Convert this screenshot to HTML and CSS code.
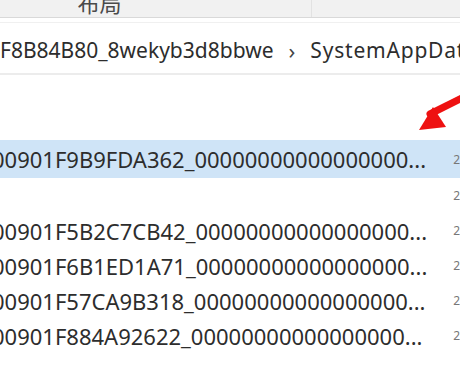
FILE: index.html
```html
<!DOCTYPE html>
<html lang="zh-CN">
<head>
  <meta charset="UTF-8">
  <title>SystemAppData</title>
  <link rel="stylesheet" href="styles.css">
</head>
<body>
  <div class="window">
    <div class="ribbon">
      <div class="ribbon-group">布局</div>
      <div class="ribbon-group wide"></div>
    </div>
    <div class="address">
      <span class="crumb">F8B84B80_8wekyb3d8bbwe</span>
      <span class="sep">›</span>
      <span class="crumb last">SystemAppData</span>
    </div>
    <div class="files">
      <div class="row selected"><span class="name">00901F9B9FDA362_00000000000000000...</span><span class="date">2</span></div>
      <div class="row"><span class="name"></span><span class="date">2</span></div>
      <div class="row"><span class="name">00901F5B2C7CB42_00000000000000000...</span><span class="date">2</span></div>
      <div class="row"><span class="name">00901F6B1ED1A71_00000000000000000...</span><span class="date">2</span></div>
      <div class="row"><span class="name">00901F57CA9B318_00000000000000000...</span><span class="date">2</span></div>
      <div class="row"><span class="name">00901F884A92622_00000000000000000...</span><span class="date">2</span></div>
    </div>
    <svg class="arrow" width="60" height="50" viewBox="0 0 60 50">
      <path d="M62 13 L30 29" stroke="#ee1111" stroke-width="7" stroke-linecap="round"/>
      <polygon points="19,45 33,22 46,42" fill="#ee1111"/>
    </svg>
  </div>
</body>
</html>
```
FILE: styles.css
```css
body {
  margin: 0;
  background: #fff;
  font-family: 'Noto Sans', 'Noto Sans CJK SC', sans-serif;
  color: #2d2d2d;
}
.window {
  width: 460px;
  height: 365px;
  overflow: hidden;
  position: relative;
}
.ribbon {
  height: 17px;
  background: #f1f1f1;
  border-bottom: 1px solid #d9d9d9;
  display: flex;
  overflow: hidden;
}
.ribbon-group {
  width: 312px;
  border-right: 1px solid #e2e2e2;
  text-align: center;
  font-size: 22px;
  line-height: 22px;
  margin-top: -8px;
  color: #4a4a4a;
  box-sizing: border-box;
  padding-right: 112px;
}
.ribbon-group.wide {
  flex: 1;
  border-right: none;
}
.address {
  height: 53px;
  margin-top: 4px;
  border-top: 1px solid #f0f0f0;
  border-bottom: 2px solid #ececec;
  display: flex;
  align-items: center;
  white-space: nowrap;
  font-size: 21px;
  padding-top: 4px;
  box-sizing: border-box;
}
.address .sep {
  margin: 0 15px 0 15px;
  font-size: 22px;
  color: #444;
}
.address .last {
  letter-spacing: 0.8px;
}
.files {
  margin-top: 65px;
  display: flex;
  flex-direction: column;
}
.row {
  height: 35px;
  display: flex;
  align-items: center;
  white-space: nowrap;
  font-size: 22px;
}
.row.selected {
  height: 38px;
  background: #cfe4f7;
}
.row .name {
  margin-left: -8px;
  width: 464px;
  overflow: hidden;
}
.row .date {
  font-size: 12px;
  color: #777;
}
.arrow {
  position: absolute;
  left: 400px;
  top: 85px;
}
```
